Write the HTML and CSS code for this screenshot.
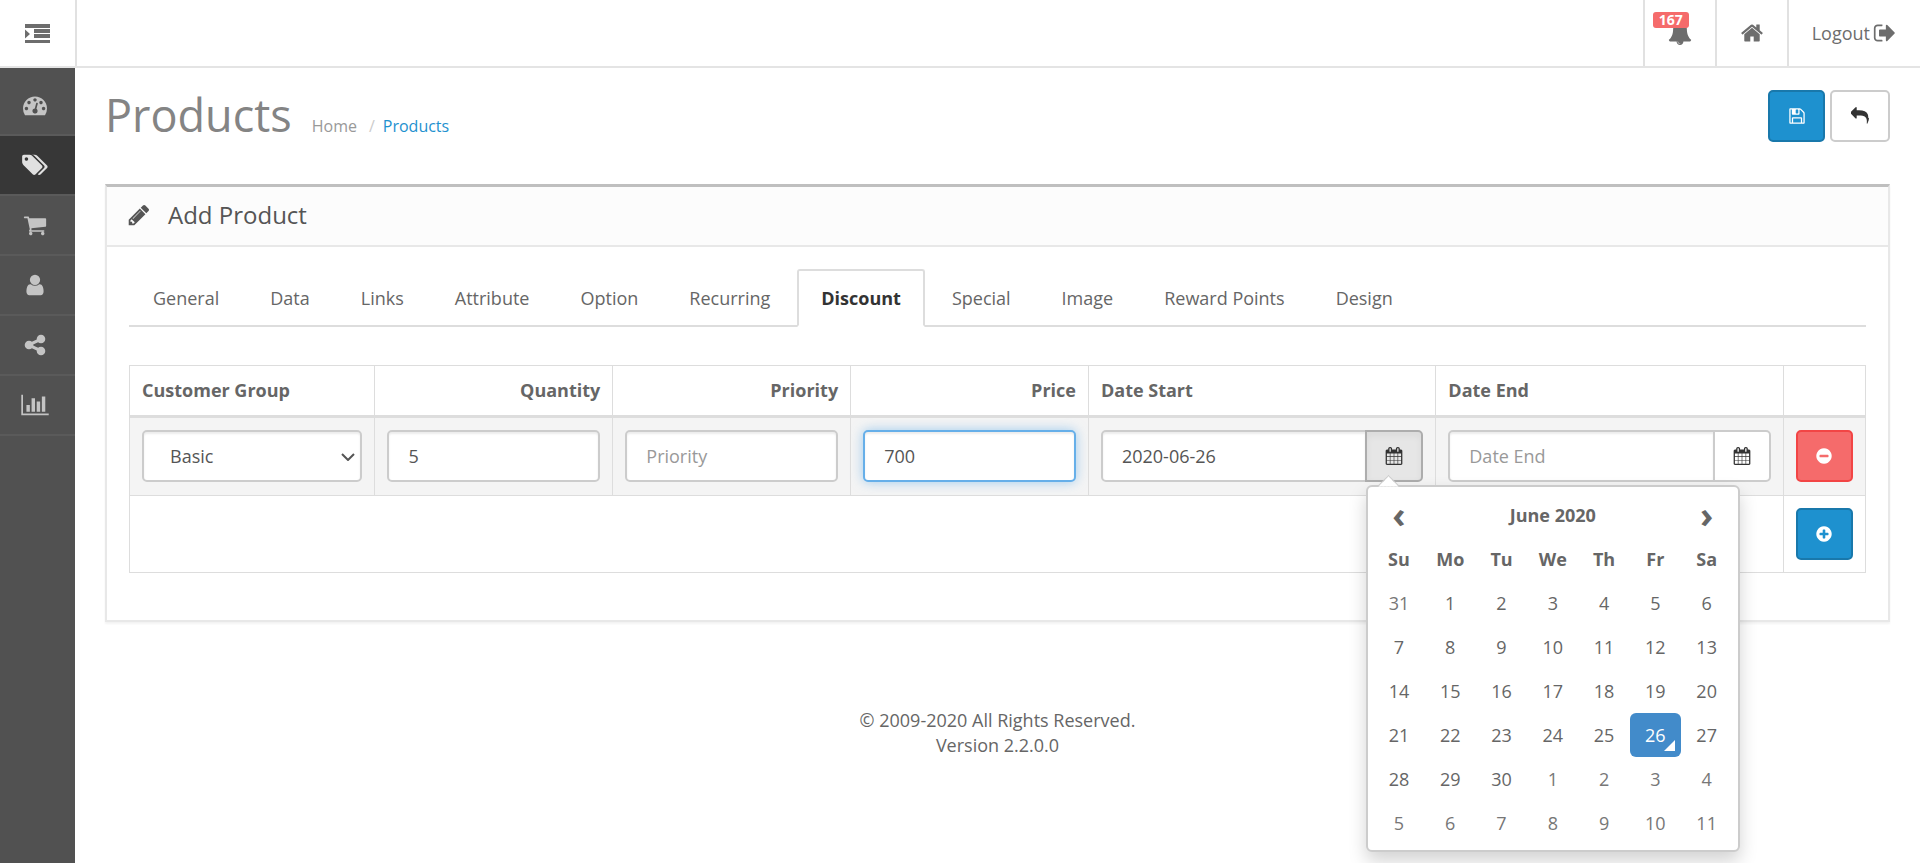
FILE: index.html
```html
<!DOCTYPE html>
<html lang="en">
<head>
<meta charset="utf-8">
<meta name="viewport" content="width=device-width, initial-scale=1">
<title>Products</title>
<link rel="stylesheet" href="styles.css">
</head>
<body>
<svg class="sprite" aria-hidden="true">
  <symbol id="i-indent" viewBox="0 0 25 19"><path d="M0 0h25v4H0zM9 5h16v4H9zM9 10h16v4H9zM0 16h25v3H0zM0 5.500l5 4.500-5 4.500z"/></symbol>
  <symbol id="i-dashboard" viewBox="0 0 1792 1792"><path d="M384 1152q0-53-37.500-90.500t-90.500-37.500-90.500 37.500-37.500 90.500 37.500 90.500 90.500 37.500 90.500-37.500 37.500-90.500zm192-448q0-53-37.500-90.500t-90.500-37.500-90.500 37.500-37.500 90.500 37.500 90.500 90.500 37.500 90.500-37.500 37.500-90.500zm428 481l101-382q6-26-7.500-48.500t-38.500-29.500-48 6.500-30 39.500l-101 382q-60 5-107 43.500t-63 98.500q-20 77 20 146t117 89 146-20 89-117q16-60-6-117t-72-91zm660-33q0-53-37.500-90.500t-90.500-37.500-90.500 37.500-37.500 90.500 37.500 90.500 90.500 37.500 90.500-37.500 37.500-90.500zm-640-640q0-53-37.500-90.500t-90.500-37.500-90.500 37.500-37.500 90.500 37.500 90.500 90.500 37.500 90.500-37.500 37.500-90.500zm448 192q0-53-37.500-90.500t-90.500-37.500-90.500 37.500-37.500 90.500 37.500 90.500 90.500 37.500 90.500-37.500 37.500-90.500zm320 448q0 261-141 483-19 29-54 29h-1402q-35 0-54-29-141-221-141-483 0-182 71-348t191-286 286-191 348-71 348 71 286 191 191 286 71 348z"/></symbol>
  <symbol id="i-tags" viewBox="128 0 1920 1792"><path d="M576 448q0-53-37.500-90.500t-90.500-37.500-90.500 37.500-37.500 90.500 37.500 90.500 90.500 37.500 90.500-37.500 37.500-90.500zm1067 576q0 53-37 90l-491 492q-39 37-91 37-53 0-90-37l-715-716q-38-37-64.500-101t-26.500-117v-416q0-52 38-90t90-38h416q53 0 117 26.500t102 64.500l715 714q37 39 37 91zm384 0q0 53-37 90l-491 492q-39 37-91 37-36 0-59-14t-53-45l470-470q37-37 37-90 0-52-37-91l-715-714q-38-38-102-64.500t-117-26.500h224q53 0 117 26.500t102 64.500l715 714q37 39 37 91z"/></symbol>
  <symbol id="i-cart" viewBox="0 0 1792 1792"><path d="M704 1536q0 52-38 90t-90 38-90-38-38-90 38-90 90-38 90 38 38 90zm896 0q0 52-38 90t-90 38-90-38-38-90 38-90 90-38 90 38 38 90zm128-1088v512q0 24-16.500 42.500t-40.500 21.500l-1044 122q13 60 13 70 0 16-24 64h920q26 0 45 19t19 45-19 45-45 19h-1024q-26 0-45-19t-19-45q0-11 8-31.500t16-36 21.500-40 15.500-29.500l-177-823h-204q-26 0-45-19t-19-45 19-45 45-19h256q16 0 28.500 6.500t19.500 15.500 13 24.500 8 26 5.500 29.500 4.500 26h1201q26 0 45 19t19 45z"/></symbol>
  <symbol id="i-user" viewBox="0 0 1792 1792"><path d="M1536 1399q0 109-62.500 187t-150.500 78h-854q-88 0-150.500-78t-62.500-187q0-85 8.500-160.500t31.500-152 58.500-131 94-89 134.500-34.500q131 128 313 128t313-128q76 0 134.500 34.500t94 89 58.500 131 31.500 152 8.500 160.500zm-256-887q0 159-112.500 271.500t-271.500 112.500-271.500-112.500-112.500-271.500 112.500-271.500 271.500-112.500 271.500 112.500 112.500 271.500z"/></symbol>
  <symbol id="i-share" viewBox="0 0 1792 1792"><path d="M1344 1024q133 0 226.500 93.500t93.500 226.500-93.500 226.500-226.500 93.500-226.500-93.500-93.500-226.500q0-12 2-34l-360-180q-92 86-218 86-133 0-226.500-93.500t-93.500-226.500 93.500-226.500 226.500-93.500q126 0 218 86l360-180q-2-22-2-34 0-133 93.500-226.500t226.500-93.500 226.500 93.500 93.500 226.500-93.500 226.500-226.500 93.500q-126 0-218-86l-360 180q2 22 2 34t-2 34l360 180q92-86 218-86z"/></symbol>
  <symbol id="i-chart" viewBox="0 0 2048 1792"><path d="M640 896v512h-256v-512h256zm384-512v1024h-256v-1024h256zm1024 1152v128h-2048v-1536h128v1408h1920zm-640-896v768h-256v-768h256zm384-384v1152h-256v-1152h256z"/></symbol>
  <symbol id="i-bell" viewBox="0 0 1792 1792"><path d="M912 1696q0-16-16-16-59 0-101.500-42.500t-42.500-101.500q0-16-16-16t-16 16q0 73 51.500 124.500t124.500 51.500q16 0 16-16zm816-288q0 52-38 90t-90 38h-448q0 106-75 181t-181 75-181-75-75-181h-448q-52 0-90-38t-38-90q50-42 91-88t85-119.500 74.500-158.500 50-206 19.500-260q0-152 117-282.500t307-158.500q-8-19-8-39 0-40 28-68t68-28 68 28 28 68q0 20-8 39 190 28 307 158.500t117 282.500q0 139 19.500 260t50 206 74.500 158.500 85 119.500 91 88z"/></symbol>
  <symbol id="i-home" viewBox="0 0 1792 1792"><path d="M1472 992v480q0 26-19 45t-45 19h-384v-384h-256v384h-384q-26 0-45-19t-19-45v-480q0-1 .5-3t.5-3l575-474 575 474q1 2 1 6zm223-69l-62 74q-8 9-21 11h-3q-13 0-21-7l-692-577-692 577q-12 8-24 7-13-2-21-11l-62-74q-8-10-7-23.500t11-21.500l719-599q32-26 76-26t76 26l244 204v-195q0-14 9-23t23-9h192q14 0 23 9t9 23v408l219 182q10 8 11 21.500t-7 23.500z"/></symbol>
  <symbol id="i-signout" viewBox="0 0 1792 1792"><path d="M704 1440q0 4 1 20t.5 26.500-3 23.500-10 19.500-20.500 6.500h-320q-119 0-203.500-84.500t-84.500-203.500v-704q0-119 84.500-203.500t203.500-84.500h320q13 0 22.500 9.500t9.500 22.500q0 4 1 20t.5 26.500-3 23.500-10 19.500-20.500 6.500h-320q-66 0-113 47t-47 113v704q0 66 47 113t113 47h312l11.500 1 11.500 3 8 5.500 7 9 2 13.500zm928-544q0 26-19 45l-544 544q-19 19-45 19t-45-19-19-45v-288h-448q-26 0-45-19t-19-45v-384q0-26 19-45t45-19h448v-288q0-26 19-45t45-19 45 19l544 544q19 19 19 45z"/></symbol>
  <symbol id="i-save" viewBox="0 0 1792 1792"><path d="M512 1536h768v-384h-768v384zm896 0h128v-896q0-14-10-38.500t-20-34.500l-281-281q-10-10-34-20t-39-10v416q0 40-28 68t-68 28h-576q-40 0-68-28t-28-68v-416h-128v1280h128v-416q0-40 28-68t68-28h832q40 0 68 28t28 68v416zm-384-928v-320q0-13-9.500-22.500t-22.500-9.500h-192q-13 0-22.500 9.500t-9.500 22.500v320q0 13 9.500 22.500t22.500 9.500h192q13 0 22.500-9.500t9.500-22.500zm640 32v928q0 40-28 68t-68 28h-1344q-40 0-68-28t-28-68v-1344q0-40 28-68t68-28h928q40 0 88 20t76 48l280 280q28 28 48 76t20 88z"/></symbol>
  <symbol id="i-reply" viewBox="0 0 1792 1792"><path d="M1792 1120q0 166-127 451-3 7-10.500 24t-13.500 30-13 22q-12 17-28 17-15 0-23.500-10t-8.500-25q0-9 2.500-26.500t2.500-23.500q5-68 5-123 0-112-19.500-200.500t-54-153.500-89-112-117-77-146.500-46.500-168.500-24.500-192-7h-224v256q0 26-19 45t-45 19-45-19l-512-512q-19-19-19-45t19-45l512-512q19-19 45-19t45 19 19 45v256h224q713 0 875 403 53 134 53 333z"/></symbol>
  <symbol id="i-pencil" viewBox="0 0 1792 1792"><path d="M491 1536l91-91-235-235-91 91v107h128v128h107zm523-928q0-22-22-22-10 0-17 7l-542 542q-7 7-7 17 0 22 22 22 10 0 17-7l542-542q7-7 7-17zm-54-192l416 416-832 832h-416v-416zm683 96q0 53-37 90l-166 166-416-416 166-165q36-38 90-38 53 0 91 38l235 234q37 39 37 91z"/></symbol>
  <symbol id="i-calendar" viewBox="0 0 1792 1792"><path d="M192 1664h288v-288h-288v288zm352 0h320v-288h-320v288zm-352-352h288v-320h-288v320zm352 0h320v-320h-320v320zm-352-384h288v-288h-288v288zm736 736h320v-288h-320v288zm-384-736h320v-288h-320v288zm768 736h288v-288h-288v288zm-384-352h320v-320h-320v320zm-352-864v-288q0-13-9.500-22.500t-22.500-9.500h-64q-13 0-22.500 9.500t-9.500 22.500v288q0 13 9.500 22.500t22.500 9.500h64q13 0 22.500-9.500t9.500-22.500zm736 864h288v-320h-288v320zm-384-384h320v-288h-320v288zm384 0h288v-288h-288v288zm32-480v-288q0-13-9.500-22.500t-22.500-9.500h-64q-13 0-22.500 9.500t-9.500 22.500v288q0 13 9.500 22.500t22.500 9.500h64q13 0 22.500-9.500t9.500-22.500zm384-64v1280q0 52-38 90t-90 38h-1408q-52 0-90-38t-38-90v-1280q0-52 38-90t90-38h128v-96q0-66 47-113t113-47h64q66 0 113 47t47 113v96h384v-96q0-66 47-113t113-47h64q66 0 113 47t47 113v96h128q52 0 90 38t38 90z"/></symbol>
  <symbol id="i-minus" viewBox="0 0 1792 1792"><path d="M1344 960v-128q0-26-19-45t-45-19h-768q-26 0-45 19t-19 45v128q0 26 19 45t45 19h768q26 0 45-19t19-45zm320-64q0 209-103 385.500t-279.500 279.500-385.500 103-385.500-103-279.500-279.500-103-385.500 103-385.500 279.500-279.500 385.500-103 385.500 103 279.500 279.500 103 385.500z"/></symbol>
  <symbol id="i-plus" viewBox="0 0 1792 1792"><path d="M1344 960v-128q0-26-19-45t-45-19h-256v-256q0-26-19-45t-45-19h-128q-26 0-45 19t-19 45v256h-256q-26 0-45 19t-19 45v128q0 26 19 45t45 19h256v256q0 26 19 45t45 19h128q26 0 45-19t19-45v-256h256q26 0 45-19t19-45zm320-64q0 209-103 385.500t-279.500 279.500-385.500 103-385.500-103-279.500-279.500-103-385.500 103-385.500 279.500-279.500 385.500-103 385.500 103 279.500 279.500 103 385.500z"/></symbol>
</svg>

<header class="topbar">
  <button class="menu-toggle" type="button" aria-label="Toggle menu"><svg class="icon-indent"><use href="#i-indent"/></svg></button>
  <nav class="top-links" aria-label="Account">
    <a class="top-link notify" href="#" aria-label="Notifications">
      <svg class="icon-lg"><use href="#i-bell"/></svg>
      <span class="badge">167</span>
    </a>
    <a class="top-link" href="#" aria-label="Store front"><svg class="icon-lg"><use href="#i-home"/></svg></a>
    <a class="top-link logout" href="#"><span>Logout</span><svg class="icon-lg"><use href="#i-signout"/></svg></a>
  </nav>
</header>

<div class="layout">
  <nav class="sidebar" aria-label="Main menu">
    <a class="side-link" href="#" aria-label="Dashboard"><svg class="icon-lg"><use href="#i-dashboard"/></svg></a>
    <a class="side-link active" href="#" aria-label="Catalog"><svg class="icon-lg icon-tags"><use href="#i-tags"/></svg></a>
    <a class="side-link" href="#" aria-label="Sales"><svg class="icon-lg"><use href="#i-cart"/></svg></a>
    <a class="side-link" href="#" aria-label="Customers"><svg class="icon-lg"><use href="#i-user"/></svg></a>
    <a class="side-link" href="#" aria-label="Marketing"><svg class="icon-lg"><use href="#i-share"/></svg></a>
    <a class="side-link" href="#" aria-label="Reports"><svg class="icon-lg icon-chart"><use href="#i-chart"/></svg></a>
  </nav>

  <div class="content">
    <main>
      <div class="page-header">
        <h1>Products</h1>
        <ol class="breadcrumb">
          <li><a href="#">Home</a></li>
          <li><a class="current" href="#">Products</a></li>
        </ol>
        <div class="page-actions">
          <button class="btn btn-primary" type="submit" form="product-form" aria-label="Save"><svg class="icon"><use href="#i-save"/></svg></button>
          <a class="btn btn-default" href="#" aria-label="Cancel"><svg class="icon"><use href="#i-reply"/></svg></a>
        </div>
      </div>

      <section class="panel">
        <div class="panel-heading">
          <svg class="icon-lg"><use href="#i-pencil"/></svg>
          <h2>Add Product</h2>
        </div>
        <form class="panel-body" id="product-form">
          <ul class="tabs">
            <li><a href="#">General</a></li>
            <li><a href="#">Data</a></li>
            <li><a href="#">Links</a></li>
            <li><a href="#">Attribute</a></li>
            <li><a href="#">Option</a></li>
            <li><a href="#">Recurring</a></li>
            <li><a class="active" href="#">Discount</a></li>
            <li><a href="#">Special</a></li>
            <li><a href="#">Image</a></li>
            <li><a href="#">Reward Points</a></li>
            <li><a href="#">Design</a></li>
          </ul>

          <table class="discounts">
            <colgroup>
              <col class="col-group"><col class="col-num"><col class="col-num"><col class="col-num"><col class="col-date"><col class="col-date"><col>
            </colgroup>
            <thead>
              <tr>
                <th id="h-group">Customer Group</th>
                <th id="h-qty" class="right">Quantity</th>
                <th id="h-priority" class="right">Priority</th>
                <th id="h-price" class="right">Price</th>
                <th id="h-start">Date Start</th>
                <th id="h-end">Date End</th>
                <td></td>
              </tr>
            </thead>
            <tbody>
              <tr class="striped">
                <td>
                  <div class="select-wrap">
                    <select class="control" aria-labelledby="h-group"><option>Basic</option></select>
                    <svg class="chevron" viewBox="0 0 14 8"><path d="M1 1l6 6 6-6"/></svg>
                  </div>
                </td>
                <td><input class="control" type="text" value="5" aria-labelledby="h-qty"></td>
                <td><input class="control" type="text" placeholder="Priority" aria-labelledby="h-priority"></td>
                <td><input class="control focused" type="text" value="700" aria-labelledby="h-price"></td>
                <td>
                  <div class="date-group">
                    <input class="control" type="text" value="2020-06-26" aria-labelledby="h-start">
                    <div class="date-toggle">
                      <button class="btn btn-default pressed" type="button" aria-label="Pick start date"><svg class="icon"><use href="#i-calendar"/></svg></button>
                      <div class="picker">
                        <table class="calendar">
                          <thead>
                            <tr>
                              <th><button class="step" type="button" aria-label="Previous month">‹</button></th>
                              <th colspan="5">June 2020</th>
                              <th><button class="step" type="button" aria-label="Next month">›</button></th>
                            </tr>
                            <tr><th>Su</th><th>Mo</th><th>Tu</th><th>We</th><th>Th</th><th>Fr</th><th>Sa</th></tr>
                          </thead>
                          <tbody>
                            <tr><td class="other">31</td><td>1</td><td>2</td><td>3</td><td>4</td><td>5</td><td>6</td></tr>
                            <tr><td>7</td><td>8</td><td>9</td><td>10</td><td>11</td><td>12</td><td>13</td></tr>
                            <tr><td>14</td><td>15</td><td>16</td><td>17</td><td>18</td><td>19</td><td>20</td></tr>
                            <tr><td>21</td><td>22</td><td>23</td><td>24</td><td>25</td><td class="selected">26</td><td>27</td></tr>
                            <tr><td>28</td><td>29</td><td>30</td><td class="other">1</td><td class="other">2</td><td class="other">3</td><td class="other">4</td></tr>
                            <tr><td class="other">5</td><td class="other">6</td><td class="other">7</td><td class="other">8</td><td class="other">9</td><td class="other">10</td><td class="other">11</td></tr>
                          </tbody>
                        </table>
                      </div>
                    </div>
                  </div>
                </td>
                <td>
                  <div class="date-group">
                    <input class="control" type="text" placeholder="Date End" aria-labelledby="h-end">
                    <div class="date-toggle">
                      <button class="btn btn-default" type="button" aria-label="Pick end date"><svg class="icon"><use href="#i-calendar"/></svg></button>
                    </div>
                  </div>
                </td>
                <td><button class="btn btn-danger" type="button" aria-label="Remove"><svg class="icon"><use href="#i-minus"/></svg></button></td>
              </tr>
            </tbody>
            <tfoot>
              <tr>
                <td colspan="6"></td>
                <td><button class="btn btn-primary" type="button" aria-label="Add Discount"><svg class="icon"><use href="#i-plus"/></svg></button></td>
              </tr>
            </tfoot>
          </table>
        </form>
      </section>
    </main>
    <footer class="footer">© 2009-2020 All Rights Reserved.<br>Version 2.2.0.0</footer>
  </div>
</div>
</body>
</html>
```

FILE: styles.css
```css
* {
  box-sizing: border-box;
}

body {
  display: flex;
  flex-direction: column;
  min-height: 100vh;
  margin: 0;
  background: #fff;
  color: #666;
  font: 18px/25px "Open Sans", sans-serif;
}

a {
  color: inherit;
  text-decoration: none;
}

button,
input,
select {
  font: inherit;
}

.sprite {
  position: absolute;
  width: 0;
  height: 0;
}

.icon {
  flex: none;
  width: 18px;
  height: 18px;
  fill: currentColor;
}

.icon-lg {
  flex: none;
  width: 24px;
  height: 24px;
  fill: currentColor;
}

.icon-indent {
  width: 25px;
  height: 19px;
  fill: currentColor;
}

/* Top bar */
.topbar {
  display: flex;
  justify-content: space-between;
  height: 68px;
  border-bottom: 2px solid #e4e4e4;
  color: #6d6d6d;
}

.menu-toggle {
  display: flex;
  align-items: center;
  justify-content: center;
  width: 77px;
  padding: 1px 0 0;
  border: 0;
  border-right: 2px solid #e1e1e1;
  background: none;
  color: inherit;
}

.top-links {
  display: flex;
}

.top-link {
  display: flex;
  align-items: center;
  padding: 0 23px;
  border-left: 2px solid #e1e1e1;
}

.notify {
  position: relative;
}

.badge {
  position: absolute;
  top: 12px;
  left: 8px;
  padding: 0 6px;
  border-radius: 3px;
  background: #f56b6b;
  color: #fff;
  font-size: 14px;
  font-weight: 700;
  line-height: 16px;
}

.logout {
  gap: 3px;
}

/* Layout */
.layout {
  display: flex;
  flex: 1;
}

.sidebar {
  flex: none;
  width: 75px;
  padding-top: 8px;
  background: #515151;
}

.side-link {
  display: flex;
  align-items: center;
  justify-content: center;
  height: 60px;
  padding-right: 5px;
  border-bottom: 2px solid #5a5a5a;
  color: #c4c4c4;
}

.side-link.active {
  background: #373737;
  color: #e0e0e0;
}

.icon-tags {
  width: 26px;
}

.icon-chart {
  width: 28px;
}

.content {
  flex: 1;
  min-width: 0;
  padding: 22px 30px;
}

/* Page header */
.page-header {
  display: flex;
  align-items: baseline;
  margin-bottom: 42px;
}

h1 {
  margin: 0;
  color: #848484;
  font-size: 45px;
  font-weight: 400;
  line-height: 50px;
}

.breadcrumb {
  display: flex;
  margin: 0 0 0 20px;
  padding: 0;
  color: #999;
  font-size: 16px;
  list-style: none;
}

.breadcrumb li + li::before {
  content: "/";
  margin: 0 8px 0 12px;
  color: #ccc;
}

.breadcrumb .current {
  color: #1e91cf;
}

.page-actions {
  display: flex;
  gap: 5px;
  align-self: flex-start;
  margin-left: auto;
}

.btn {
  display: flex;
  align-items: center;
  justify-content: center;
  width: 57px;
  height: 52px;
  padding: 0;
  border: 2px solid;
  border-radius: 5px;
}

.btn-primary {
  border-color: #1978ab;
  background: #1e91cf;
  color: #fff;
}

.btn-danger {
  border-color: #f24545;
  background: #f56b6b;
  color: #fff;
}

.btn-default {
  width: 60px;
  border-color: #ccc;
  background: #fff;
  color: #333;
}

.btn-default.pressed {
  border-color: #adadad;
  background: #e6e6e6;
  box-shadow: inset 0 4px 7px rgba(0, 0, 0, .05);
}

/* Panel */
.panel {
  border: 2px solid #e8e8e8;
  border-top: 3px solid #bfbfbf;
  box-shadow: 0 2px 2px rgba(0, 0, 0, .05);
}

.panel-heading {
  display: flex;
  align-items: center;
  gap: 17px;
  padding: 13px 20px 15px;
  border-bottom: 2px solid #e8e8e8;
  background: #fcfcfc;
  color: #555;
}

h2 {
  margin: 0;
  font-size: 24px;
  font-weight: 400;
  line-height: 30px;
}

.panel-body {
  padding: 22px 22px 47px;
}

.tabs {
  display: flex;
  gap: 3px;
  margin: 0 0 38px;
  padding: 0;
  border-bottom: 2px solid #ddd;
  list-style: none;
}

.tabs li {
  margin-bottom: -2px;
}

.tabs a {
  display: block;
  padding: 15px 22px 14px;
  border: 2px solid transparent;
  border-radius: 3px 3px 0 0;
}

.tabs .active {
  border-color: #ddd;
  border-bottom-color: #fff;
  background: #fff;
  color: #333;
  font-weight: 700;
}

/* Discount rows */
.discounts {
  width: 100%;
  border-collapse: collapse;
  table-layout: fixed;
}

.col-group {
  width: 14.14%;
}

.col-num {
  width: 13.7%;
}

.col-date {
  width: 20.01%;
}

.discounts > * > tr > * {
  padding: 12px;
  border: 1px solid #ddd;
  text-align: left;
}

.discounts > thead > tr > * {
  border-bottom-width: 3px;
}

.discounts > thead > tr > .right {
  text-align: right;
}

.discounts > tbody > .striped > td {
  padding-bottom: 13px;
  background: #f4f4f4;
}

.control {
  display: block;
  width: 100%;
  height: 52px;
  padding: 0 19px;
  border: 2px solid #ccc;
  border-radius: 5px;
  background: #fff;
  box-shadow: inset 0 2px 2px rgba(0, 0, 0, .075);
  color: #555;
  outline: 0;
}

.control::placeholder {
  color: #999;
  opacity: 1;
}

.focused {
  border-color: #66afe9;
  box-shadow: inset 0 2px 2px rgba(0, 0, 0, .075), 0 0 12px rgba(102, 175, 233, .6);
}

.select-wrap {
  position: relative;
}

select.control {
  padding: 0 26px;
  appearance: none;
}

.chevron {
  position: absolute;
  top: 23px;
  right: 7px;
  width: 14px;
  height: 8px;
  fill: none;
  stroke: #555;
  stroke-width: 2;
  pointer-events: none;
}

.date-group {
  display: flex;
}

.date-group .control {
  flex: 1;
  min-width: 0;
  border-radius: 5px 0 0 5px;
}

.date-toggle {
  position: relative;
  margin-left: -2px;
}

.date-toggle > .btn {
  width: 58px;
  border-radius: 0 5px 5px 0;
}

/* Date picker */
.picker {
  position: absolute;
  z-index: 10;
  top: 55px;
  left: 1px;
  width: 374px;
  padding: 6px 6px 5px 5px;
  border: 2px solid #ccc;
  border-radius: 6px;
  background: #fff;
  box-shadow: 0 9px 18px rgba(0, 0, 0, .175);
}

.picker::before {
  content: "";
  position: absolute;
  top: -9px;
  left: 13px;
  width: 14px;
  height: 14px;
  border-top: 1px solid #ccc;
  border-left: 1px solid #ccc;
  background: linear-gradient(135deg, #fff 50%, transparent 50%);
  transform: rotate(45deg);
}

.calendar {
  width: 100%;
  border-collapse: collapse;
  table-layout: fixed;
}

.calendar th,
.calendar td {
  height: 44px;
  padding: 0;
  text-align: center;
}

.step {
  width: 100%;
  padding: 0;
  border: 0;
  background: none;
  color: inherit;
  font-size: 36px;
  font-weight: 700;
  line-height: 44px;
}

.other {
  color: #777;
}

.calendar .selected {
  position: relative;
  border-radius: 6px;
  background: #428bca;
  color: #fff;
}

.selected::after {
  content: "";
  position: absolute;
  right: 6px;
  bottom: 6px;
  border-bottom: 11px solid #fff;
  border-left: 11px solid transparent;
}

.footer {
  padding: 86px 0 40px;
  text-align: center;
}
```
